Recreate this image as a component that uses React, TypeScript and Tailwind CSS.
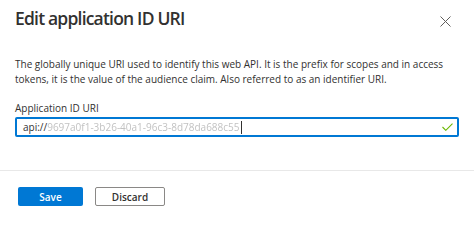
import React from "react";

const font = { fontFamily: '"Open Sans", "Noto Sans", sans-serif' };

const App = () => {
  return (
    <div className="w-[474px] h-[222px] bg-white overflow-hidden text-[#323130]" style={font}>
      <div className="px-[15px]">
        <div className="flex items-start justify-between pt-[6px]">
          <h1 className="text-[17.5px] leading-[24px] font-semibold tracking-[-0.8px] text-[#323130]">
            Edit application ID URI
          </h1>
          <button className="mt-[10px] mr-[8px] text-[#605e5c]" aria-label="Close">
            <svg width="11" height="11" viewBox="0 0 11 11" fill="none" stroke="currentColor" strokeWidth="1">
              <path d="M0.5 0.5L10.5 10.5M10.5 0.5L0.5 10.5" />
            </svg>
          </button>
        </div>

        <p className="mt-[27px] text-[10px] leading-[15px] text-[#323130]">
          The globally unique URI used to identify this web API. It is the prefix for scopes and in access tokens, it is
          the value of the audience claim. Also referred to as an identifier URI.
        </p>

        <label className="block mt-[14px] text-[10px] leading-[14px]">Application ID URI</label>
        <div className="mt-[2px] h-[20px] border-2 border-[#0078d4] rounded-[2px] flex items-center pl-[6px] pr-[4px]">
          <span className="text-[10px] leading-[14px]">api://</span>
          <span className="text-[10px] leading-[14px] text-[#c2c2c2] blur-[0.5px]">
            9697a0f1-3b26-40a1-96c3-8d78da688c55
          </span>
          <span className="w-px h-[13px] bg-[#323130] ml-px" />
          <span className="flex-1" />
          <svg width="11" height="8" viewBox="0 0 11 8" fill="none" stroke="#6bb700" strokeWidth="1.1">
            <path d="M0.5 4L3.8 7.3L10.5 0.6" />
          </svg>
        </div>
      </div>

      <div className="mt-[33px] h-px bg-[#e8e8e8]" />

      <div className="flex gap-[12px] pl-[18px] pt-[16px]">
        <button className="w-[65px] h-[19px] bg-[#0078d4] rounded-[2px] text-white text-[10px] font-semibold leading-none">
          Save
        </button>
        <button className="w-[70px] h-[19px] border border-[#8a8886] rounded-[2px] text-[#323130] text-[10px] font-semibold leading-none">
          Discard
        </button>
      </div>
    </div>
  );
};

export default App;
